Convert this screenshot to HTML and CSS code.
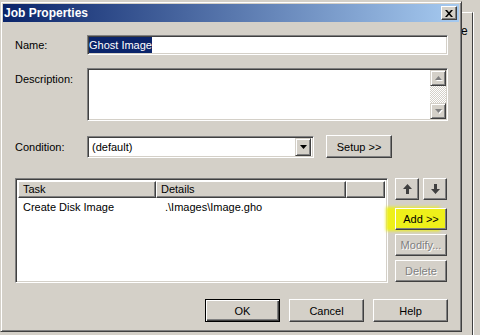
FILE: index.html
```html
<!DOCTYPE html>
<html lang="en">
  <head>
    <meta charset="UTF-8" />
    <meta name="viewport" content="width=device-width, initial-scale=1.0" />
    <title>Job Properties</title>
    <link rel="stylesheet" href="styles.css">
  </head>
  <body>
    <div class="backwin"><span class="back-e">e</span></div>

    <div class="dialog">
      <div class="titlebar">
        <span class="title">Job Properties</span>
        <button class="close">
          <svg width="8" height="7" viewBox="0 0 8 7">
            <path d="M0 0h2l2 2.2L6 0h2L5 3.5 8 7H6L4 4.8 2 7H0l3-3.5z" fill="#000" />
          </svg>
        </button>
      </div>

      <div class="content">
        <div class="row row-name">
          <label>Name:</label>
          <div class="field name-field"><span class="sel">Ghost Image</span></div>
        </div>

        <div class="row row-desc">
          <label>Description:</label>
          <div class="field desc-field">
            <div class="vscroll">
              <span class="sbtn">
                <svg width="7" height="5" viewBox="0 0 7 5"><path d="M3.5 0 7 4H0z" fill="#808080" /></svg>
              </span>
              <span class="track"></span>
              <span class="sbtn">
                <svg width="7" height="5" viewBox="0 0 7 5"><path d="M0 0h7L3.5 4z" fill="#808080" /></svg>
              </span>
            </div>
          </div>
        </div>

        <div class="row row-cond">
          <label>Condition:</label>
          <div class="field combo">
            <span class="combo-text">(default)</span>
            <span class="drop">
              <svg width="7" height="4" viewBox="0 0 7 4"><path d="M0 0h7L3.5 4z" fill="#000" /></svg>
            </span>
          </div>
          <button class="btn setup">Setup &gt;&gt;</button>
        </div>

        <div class="tasks">
          <div class="field list">
            <div class="list-head">
              <span class="col col-task">Task</span>
              <span class="col col-details">Details</span>
              <span class="col col-rest"></span>
            </div>
            <div class="list-row">
              <span class="cell-task">Create Disk Image</span>
              <span class="cell-details">.\Images\Image.gho</span>
            </div>
          </div>

          <div class="side">
            <div class="moves">
              <button class="btn move">
                <svg width="9" height="10" viewBox="0 0 9 10"><path d="M4.5 0 9 5H6v5H3V5H0z" fill="#404040" /></svg>
              </button>
              <button class="btn move">
                <svg width="9" height="10" viewBox="0 0 9 10"><path d="M3 0h3v5h3L4.5 10 0 5h3z" fill="#404040" /></svg>
              </button>
            </div>
            <button class="btn side-btn add">Add &gt;&gt;</button>
            <button class="btn side-btn disabled">Modify...</button>
            <button class="btn side-btn disabled">Delete</button>
          </div>
        </div>

        <div class="footer">
          <button class="btn foot-btn default">OK</button>
          <button class="btn foot-btn">Cancel</button>
          <button class="btn foot-btn">Help</button>
        </div>
      </div>
    </div>
  </body>
</html>
```

FILE: styles.css
```css
body {
  margin: 0;
  width: 480px;
  height: 335px;
  overflow: hidden;
  position: relative;
  background: #d4d0c8;
  font-family: "Liberation Sans", Arial, sans-serif;
  font-size: 11px;
  color: #000;
}
.backwin {
  position: absolute;
  left: 440px;
  top: 12px;
  width: 33px;
  height: 323px;
  box-sizing: border-box;
  border-top: 1px solid #fff;
  border-right: 1px solid #404040;
  box-shadow: 1px 0 #fff;
}
.back-e {
  position: absolute;
  left: 21px;
  top: 11px;
  font-size: 12px;
}
.dialog {
  position: absolute;
  left: 0;
  top: 1px;
  width: 462px;
  height: 331px;
  box-sizing: border-box;
  background: #d4d0c8;
  border: 1px solid;
  border-color: #d4d0c8 #404040 #404040 #d4d0c8;
  box-shadow: inset 1px 1px #fff, inset -1px -1px #808080;
  padding: 2px;
  display: flex;
  flex-direction: column;
}
.titlebar {
  height: 18px;
  display: flex;
  align-items: center;
  justify-content: space-between;
  padding: 0 2px 0 1px;
  background: linear-gradient(90deg, #0a246a, #a6caf0);
}
.title {
  color: #fff;
  font-weight: bold;
  font-size: 12px;
}
.close {
  width: 16px;
  height: 14px;
  padding: 0;
  display: flex;
  align-items: center;
  justify-content: center;
  background: #d4d0c8;
  border: 1px solid;
  border-color: #fff #404040 #404040 #fff;
  box-shadow: inset -1px -1px #808080;
}
.content {
  padding: 13px 11px 0 12px;
}
.row {
  display: grid;
  grid-template-columns: 72px 361px;
}
.row-name {
  height: 20px;
  align-items: center;
  margin-bottom: 13px;
}
.row-desc {
  height: 53px;
  margin-bottom: 14px;
}
.row-desc label {
  padding-top: 5px;
}
.row-cond {
  grid-template-columns: 72px 227px 78px;
  height: 23px;
  align-items: center;
}
.field {
  box-sizing: border-box;
  background: #fff;
  border: 1px solid;
  border-color: #808080 #fff #fff #808080;
  box-shadow: inset 1px 1px #404040, inset -1px -1px #d4d0c8;
}
.name-field {
  height: 20px;
  padding: 1px;
  display: flex;
  align-items: center;
}
.sel {
  background: #0a246a;
  color: #fff;
  line-height: 16px;
}
.desc-field {
  height: 53px;
  padding: 1px;
  display: flex;
  justify-content: flex-end;
}
.vscroll {
  width: 16px;
  display: flex;
  flex-direction: column;
}
.sbtn {
  height: 16px;
  box-sizing: border-box;
  display: flex;
  align-items: center;
  justify-content: center;
  background: #d4d0c8;
  border: 1px solid;
  border-color: #d4d0c8 #404040 #404040 #d4d0c8;
  box-shadow: inset 1px 1px #fff, inset -1px -1px #808080;
}
.sbtn svg {
  filter: drop-shadow(1px 1px 0 #fff);
}
.track {
  flex: 1;
  background: repeating-conic-gradient(#d4d0c8 0 25%, #fff 0 50%) 0 0 / 2px 2px;
}
.combo {
  height: 22px;
  padding: 2px;
  display: flex;
  align-items: center;
  justify-content: space-between;
}
.combo-text {
  padding-left: 2px;
}
.drop {
  width: 16px;
  height: 18px;
  box-sizing: border-box;
  display: flex;
  align-items: center;
  justify-content: center;
  background: #d4d0c8;
  border: 1px solid;
  border-color: #d4d0c8 #404040 #404040 #d4d0c8;
  box-shadow: inset 1px 1px #fff, inset -1px -1px #808080;
}
.btn {
  font-family: "Liberation Sans", Arial, sans-serif;
  font-size: 11px;
  color: #000;
  background: #d4d0c8;
  border: 1px solid;
  border-color: #fff #404040 #404040 #fff;
  box-shadow: inset -1px -1px #808080;
  padding: 0;
}
.setup {
  height: 23px;
  margin-left: 12px;
}
.tasks {
  display: flex;
  margin-top: 20px;
  height: 105px;
}
.list {
  width: 373px;
  height: 105px;
  padding: 2px;
}
.list-head {
  display: flex;
  height: 17px;
}
.col {
  box-sizing: border-box;
  background: #d4d0c8;
  border: 1px solid;
  border-color: #fff #404040 #404040 #fff;
  box-shadow: inset -1px -1px #808080;
  padding: 1px 0 0 4px;
}
.col-task {
  width: 138px;
}
.col-details {
  width: 190px;
}
.col-rest {
  flex: 1;
}
.list-row {
  display: flex;
  padding-top: 3px;
}
.cell-task {
  width: 140px;
  padding-left: 5px;
}
.cell-details {
  padding-left: 2px;
}
.side {
  margin-left: 7px;
  width: 52px;
  display: flex;
  flex-direction: column;
  gap: 4px;
}
.moves {
  display: flex;
  justify-content: space-between;
  margin-bottom: 4px;
}
.move {
  width: 24px;
  height: 22px;
  display: flex;
  align-items: center;
  justify-content: center;
}
.side-btn {
  height: 22px;
}
.add {
  background: #eef01a;
  box-shadow: inset -1px -1px #808080, -8px 0 3px 1px #eef01a;
}
.disabled {
  color: #808080;
  text-shadow: 1px 1px #fff;
}
.footer {
  margin-top: 16px;
  display: flex;
  justify-content: flex-end;
  gap: 9px;
}
.foot-btn {
  width: 75px;
  height: 23px;
}
.default {
  border-color: #000;
  box-shadow: inset 1px 1px #fff, inset -1px -1px #404040, inset -2px -2px #808080;
}
```
